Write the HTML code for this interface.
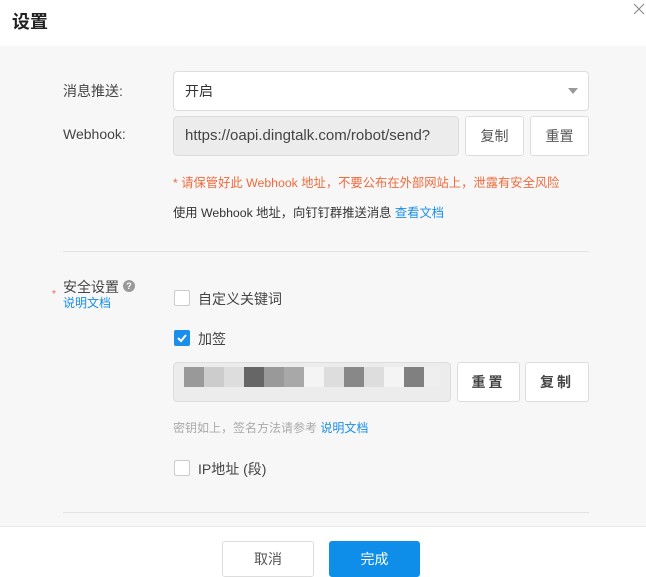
<!DOCTYPE html>
<html><head><meta charset="utf-8"><style>
*{margin:0;padding:0;box-sizing:border-box}
body{width:646px;height:574px;background:#fff;font-family:"Liberation Sans","Noto Sans CJK SC",sans-serif;position:relative;overflow:hidden;color:#333}
.a{position:absolute}
.body{left:0;top:46px;width:646px;height:481px;background:#f7f7f7;border-bottom:1px solid #e8e8e8}
.box{position:absolute;border:1px solid #ddd;border-radius:4px;background:#fff}
.btn{position:absolute;border:1px solid #ddd;border-radius:3px;background:#fff;font-size:14px;color:#555;display:flex;align-items:center;justify-content:center}
.lbl{font-size:14px;color:#444}
.cb{position:absolute;width:16px;height:16px;border:1px solid #ccc;border-radius:2px;background:#fff}
.blk{position:absolute;top:367px;height:20px}
</style></head><body>
<div class="a" style="left:12px;top:8px;font-size:18px;font-weight:bold;color:#222">设置</div>
<svg class="a" style="left:633px;top:3px" width="12" height="12" viewBox="0 0 12 12"><path d="M1 1L11 11M11 1L1 11" stroke="#888" stroke-width="1.1"/></svg>
<div class="a body"></div>
<div class="a lbl" style="left:63px;top:81px">消息推送:</div>
<div class="box" style="left:173px;top:71px;width:416px;height:40px"></div>
<div class="a" style="left:185px;top:81px;font-size:14px">开启</div>
<div class="a" style="left:568px;top:88px;width:0;height:0;border-left:5px solid transparent;border-right:5px solid transparent;border-top:6px solid #999"></div>
<div class="a lbl" style="left:63px;top:126px">Webhook:</div>
<div class="box" style="left:173px;top:116px;width:286px;height:40px;background:#ececec"></div>
<div class="a" style="left:185px;top:127px;font-size:15px;color:#444">https://oapi.dingtalk.com/robot/send?</div>
<div class="btn" style="left:465px;top:116px;width:59px;height:40px">复制</div>
<div class="btn" style="left:530px;top:116px;width:59px;height:40px">重置</div>
<div class="a" style="left:173px;top:173px;font-size:12.3px;color:#f06a3c">* 请保管好此 Webhook 地址，不要公布在外部网站上，泄露有安全风险</div>
<div class="a" style="left:173px;top:203px;font-size:12.3px;color:#333">使用 Webhook 地址，向钉钉群推送消息 <span style="color:#1a8ee8">查看文档</span></div>
<div class="a" style="left:63px;top:251px;width:526px;height:1px;background:#e3e3e3"></div>
<div class="a" style="left:52px;top:289px;font-size:10px;color:#f55">*</div>
<div class="a lbl" style="left:63px;top:277px">安全设置</div>
<div class="a" style="left:123px;top:280px;width:12px;height:12px;border-radius:50%;background:#999;color:#fff;font-size:9px;text-align:center;line-height:12px;font-weight:bold">?</div>
<div class="a" style="left:63px;top:294px;font-size:12px;color:#1a8ee8">说明文档</div>
<div class="cb" style="left:174px;top:290px"></div>
<div class="a lbl" style="left:198px;top:289px">自定义关键词</div>
<div class="cb" style="left:174px;top:330px;background:#1a8ee8;border-color:#1a8ee8"><svg width="14" height="14" viewBox="0 0 14 14"><path d="M3 7l3 3 5-6" stroke="#fff" stroke-width="2" fill="none"/></svg></div>
<div class="a lbl" style="left:198px;top:329px">加签</div>
<div class="box" style="left:173px;top:362px;width:278px;height:40px;background:#ececec"></div>
<div class="blk" style="left:184px;width:20px;background:#999"></div>
<div class="blk" style="left:204px;width:20px;background:#ccc"></div>
<div class="blk" style="left:224px;width:20px;background:#ddd"></div>
<div class="blk" style="left:244px;width:20px;background:#666"></div>
<div class="blk" style="left:264px;width:20px;background:#999"></div>
<div class="blk" style="left:284px;width:20px;background:#a8a8a8"></div>
<div class="blk" style="left:304px;width:20px;background:#f4f4f4"></div>
<div class="blk" style="left:324px;width:20px;background:#ddd"></div>
<div class="blk" style="left:344px;width:20px;background:#888"></div>
<div class="blk" style="left:364px;width:20px;background:#ddd"></div>
<div class="blk" style="left:384px;width:20px;background:#f4f4f4"></div>
<div class="blk" style="left:404px;width:20px;background:#808080"></div>
<div class="blk" style="left:424px;width:16px;background:#eee"></div>
<div class="btn" style="left:457px;top:362px;width:63px;height:40px;font-weight:bold;color:#444;letter-spacing:3px">重置</div>
<div class="btn" style="left:525px;top:362px;width:64px;height:40px;font-weight:bold;color:#444;letter-spacing:3px">复制</div>
<div class="a" style="left:173px;top:419px;font-size:12px;color:#aaa">密钥如上，签名方法请参考 <span style="color:#1a8ee8">说明文档</span></div>
<div class="cb" style="left:174px;top:460px"></div>
<div class="a lbl" style="left:198px;top:459px">IP地址 (段)</div>
<div class="a" style="left:63px;top:512px;width:526px;height:1px;background:#e3e3e3"></div>
<div class="btn" style="left:222px;top:541px;width:92px;height:36px;color:#555">取消</div>
<div class="btn" style="left:329px;top:541px;width:91px;height:36px;background:#0f8ee9;border-color:#0f8ee9;color:#fff">完成</div>
</body></html>
